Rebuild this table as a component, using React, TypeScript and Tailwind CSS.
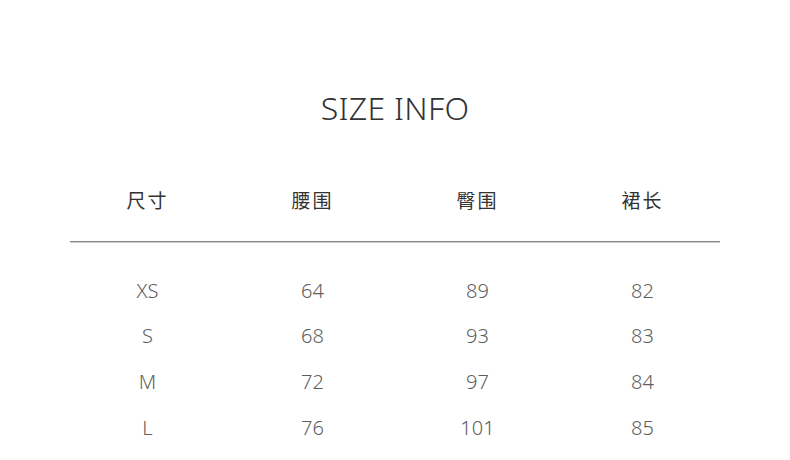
import React from "react";

const headers = ["尺寸", "腰围", "臀围", "裙长"];
const rows = [
  ["XS", "64", "89", "82"],
  ["S", "68", "93", "83"],
  ["M", "72", "97", "84"],
  ["L", "76", "101", "85"],
];

export default function App() {
  return (
    <div
      className="w-[790px] h-[460px] bg-white flex flex-col items-center"
      style={{ fontFamily: '"Noto Sans", "Noto Sans CJK SC", sans-serif' }}
    >
      {/* 标题 */}
      <h1 className="mt-[84px] text-[32px] leading-[48px] text-[#333] font-light tracking-[0.3px]">SIZE INFO</h1>

      {/* 表头 */}
      <div className="mt-[53px] w-[660px] grid grid-cols-4">
        {headers.map((h) => (
          <div key={h} className="text-center text-[19px] leading-[32px] text-[#333] tracking-[2px]">
            {h}
          </div>
        ))}
      </div>

      <div className="mt-[24px] w-[650px] h-[2px] bg-[#888] border-b border-[#ccc]" />

      {/* 数据 */}
      <div className="mt-[25px] w-[660px] flex flex-col">
        {rows.map((r) => (
          <div key={r[0]} className="grid grid-cols-4 h-[45.6px] items-center">
            {r.map((c, i) => (
              <div key={i} className="text-center text-[20px] leading-[30px] text-[#5e5e5e] font-light">
                {c}
              </div>
            ))}
          </div>
        ))}
      </div>
    </div>
  );
}
